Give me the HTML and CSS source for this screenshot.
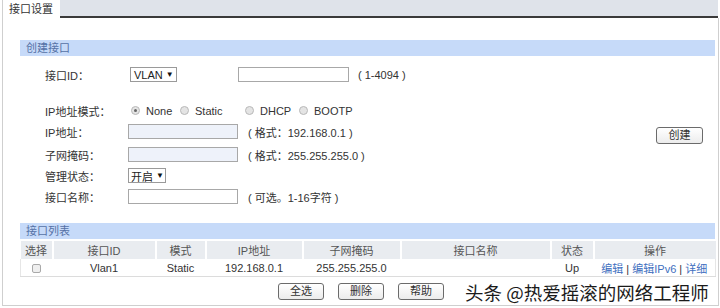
FILE: index.html
```html
<!DOCTYPE html>
<html lang="zh-CN">
<head>
<meta charset="utf-8">
<title>接口设置</title>
<link rel="stylesheet" href="styles.css">
</head>
<body>
<div class="page">
  <div class="tabbar">
    <div class="tab">接口设置</div>
    <div class="tabrest"></div>
  </div>
  <div class="panel">
    <div class="section-title">创建接口</div>
    <div class="form">
      <div class="rows">
        <div class="row">
          <span class="label">接口ID：</span>
          <span class="select sel-vlan">VLAN<span class="arrow">▼</span></span>
          <span class="input input-id"></span>
          <span class="hint hint-id">( 1-4094 )</span>
        </div>
        <div class="row row-mode">
          <span class="label">IP地址模式：</span>
          <div class="radios">
            <span class="opt"><span class="radio checked"></span>None</span>
            <span class="opt"><span class="radio"></span>Static</span>
            <span class="opt"><span class="radio"></span>DHCP</span>
            <span class="opt"><span class="radio"></span>BOOTP</span>
          </div>
        </div>
        <div class="row">
          <span class="label">IP地址：</span>
          <span class="input input-blue"></span>
          <span class="hint">( 格式：192.168.0.1 )</span>
        </div>
        <div class="row row-mask">
          <span class="label">子网掩码：</span>
          <span class="input input-blue"></span>
          <span class="hint">( 格式：255.255.255.0 )</span>
        </div>
        <div class="row">
          <span class="label">管理状态：</span>
          <span class="select sel-state">开启<span class="arrow">▼</span></span>
        </div>
        <div class="row">
          <span class="label">接口名称：</span>
          <span class="input"></span>
          <span class="hint">( 可选。1-16字符 )</span>
        </div>
      </div>
      <button class="btn btn-create">创建</button>
    </div>
    <div class="section-title">接口列表</div>
    <table class="list">
      <colgroup>
        <col class="c1"><col class="c2"><col class="c3"><col class="c4">
        <col class="c5"><col class="c6"><col class="c7"><col class="c8">
      </colgroup>
      <thead>
        <tr>
          <th>选择</th><th>接口ID</th><th>模式</th><th>IP地址</th>
          <th>子网掩码</th><th>接口名称</th><th>状态</th><th>操作</th>
        </tr>
      </thead>
      <tbody>
        <tr>
          <td><span class="checkbox"></span></td>
          <td>Vlan1</td>
          <td>Static</td>
          <td>192.168.0.1</td>
          <td>255.255.255.0</td>
          <td></td>
          <td>Up</td>
          <td class="ops"><a>编辑</a> | <a>编辑IPv6</a> | <a>详细</a></td>
        </tr>
      </tbody>
    </table>
    <div class="actions">
      <button class="btn">全选</button>
      <button class="btn">删除</button>
      <button class="btn">帮助</button>
    </div>
  </div>
  <div class="watermark">头条 @热爱摇滚的网络工程师</div>
</div>
</body>
</html>
```
FILE: styles.css
```css
html, body {
  margin: 0;
  padding: 0;
  background: #ffffff;
}
body {
  font-family: "Liberation Sans", "Noto Sans CJK SC", sans-serif;
  font-size: 11px;
  color: #333333;
}
.page {
  position: relative;
  width: 720px;
  height: 308px;
  overflow: hidden;
}
.tabbar {
  display: flex;
  height: 18px;
}
.tab {
  width: 58px;
  padding-left: 6px;
  box-sizing: border-box;
  line-height: 19px;
  background: #ffffff;
  color: #333;
  border-left: 1px solid #d0d0d0;
  margin-left: 2px;
}
.tabrest {
  flex: 1;
  background: #dfe3ea;
  border-bottom: 2px solid #3a3a3a;
  margin-right: 2px;
}
.panel {
  margin-left: 2px;
  margin-right: 1px;
  height: 288px;
  box-sizing: border-box;
  border-left: 1px solid #cfcfcf;
  border-right: 1px solid #cfcfcf;
  border-bottom: 1px solid #cfcfcf;
  padding: 22px 3px 0 17px;
}
.section-title {
  height: 16px;
  line-height: 16px;
  padding-left: 6px;
  background: #c6daf9;
  color: #5571a6;
}
.form {
  display: flex;
  padding: 8px 0 16px 0;
}
.rows {
  flex: 1;
}
.row {
  display: flex;
  align-items: center;
  height: 21px;
}
.row-mode {
  margin-top: 15px;
}
.row-mask {
  margin-top: 2px;
}
.label {
  width: 83px;
  padding-left: 25px;
  flex: none;
  color: #333;
}
.select {
  display: flex;
  align-items: center;
  justify-content: space-between;
  height: 15px;
  box-sizing: border-box;
  border: 1px solid #9a9a9a;
  background: #fff;
  padding: 0 3px 0 3px;
  color: #222;
  white-space: nowrap;
  flex: none;
}
.sel-vlan {
  width: 47px;
  margin-left: 2px;
}
.sel-state {
  width: 38px;
  padding-left: 2px;
}
.arrow {
  font-size: 8px;
  color: #111;
  margin-left: 3px;
}
.input {
  display: block;
  width: 110px;
  height: 15px;
  box-sizing: border-box;
  border: 1px solid #a8a8a8;
  background: #fff;
  flex: none;
}
.input-blue {
  background: #eef2fa;
}
.input-id {
  width: 111px;
  margin-left: 61px;
}
.hint {
  margin-left: 10px;
  color: #333;
  white-space: nowrap;
}
.hint-id {
  margin-left: 9px;
}
.radios {
  display: grid;
  grid-template-columns: 49px 65px 54px auto;
  margin-left: 3px;
}
.opt {
  display: flex;
  align-items: center;
  gap: 6px;
}
.radio {
  width: 9px;
  height: 9px;
  box-sizing: border-box;
  border-radius: 50%;
  border: 1px solid #b9b9b9;
  background: #e4e4e4;
  position: relative;
}
.radio.checked::after {
  content: "";
  position: absolute;
  left: 2px;
  top: 2px;
  width: 3px;
  height: 3px;
  border-radius: 50%;
  background: #666;
}
.btn {
  font-family: "Liberation Sans", "Noto Sans CJK SC", sans-serif;
  font-size: 11px;
  color: #333;
  width: 46px;
  height: 17px;
  padding: 0;
  border: 1px solid #6b6b6b;
  border-radius: 3px;
  background: linear-gradient(#ffffff, #ececec);
  line-height: 15px;
}
.btn-create {
  align-self: center;
  margin-right: 12px;
  width: 47px;
}
.list {
  margin-top: 2px;
  width: 695px;
  border-collapse: collapse;
  table-layout: fixed;
}
.c1 { width: 32px; }
.c2 { width: 103px; }
.c3 { width: 50px; }
.c4 { width: 97px; }
.c5 { width: 98px; }
.c6 { width: 150px; }
.c7 { width: 43px; }
.c8 { width: 122px; }
.list th {
  height: 18px;
  padding: 0;
  font-weight: normal;
  color: #555;
  background: #e9ecf0;
  border-left: 2px solid #ffffff;
  text-align: center;
}
.list th:first-child {
  border-left: none;
}
.list td {
  height: 17px;
  padding: 0;
  text-align: center;
  color: #333;
  border-bottom: 1px solid #dcdcdc;
}
.list td:first-child {
  border-left: 1px solid #e6e6e6;
}
.list td:last-child {
  border-right: 1px solid #e6e6e6;
}
.checkbox {
  display: inline-block;
  width: 9px;
  height: 9px;
  box-sizing: border-box;
  border: 1px solid #a9a9a9;
  border-radius: 2px;
  background: #efefef;
  vertical-align: middle;
}
.ops {
  color: #7a8fb8;
}
.ops a {
  color: #3f6fc0;
}
.actions {
  display: flex;
  gap: 14px;
  padding-left: 258px;
  margin-top: 6px;
}
.watermark {
  position: absolute;
  left: 465px;
  top: 280px;
  font-family: "Noto Sans CJK SC", sans-serif;
  font-size: 18.5px;
  line-height: 24px;
  color: #1a1a1a;
  white-space: nowrap;
  text-shadow: 1px 0 0 #fff, -1px 0 0 #fff, 0 1px 0 #fff, 0 -1px 0 #fff;
}
```
